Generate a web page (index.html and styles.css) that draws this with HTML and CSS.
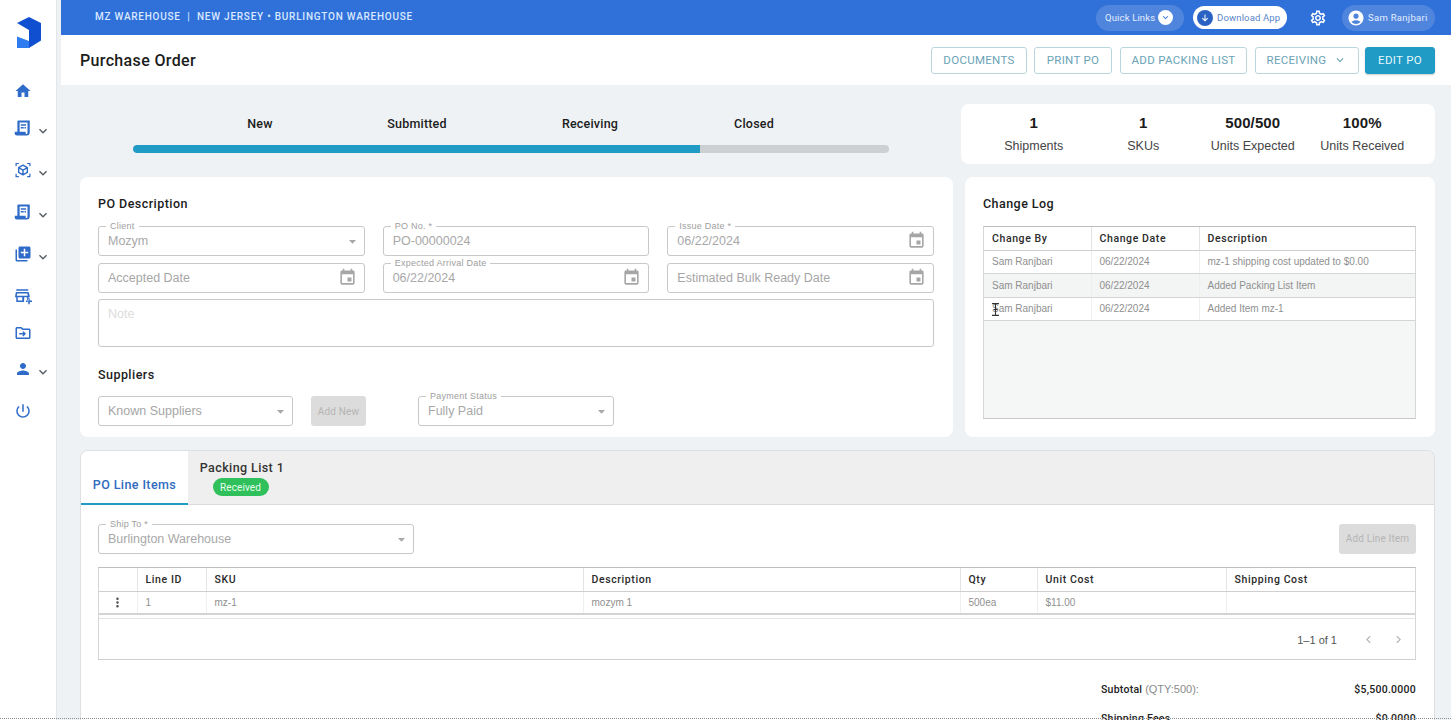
FILE: index.html
```html
<!DOCTYPE html>
<html lang="en">
<head>
<meta charset="utf-8">
<title>Purchase Order</title>
<link rel="stylesheet" href="styles.css">
</head>
<body>
<svg class="sprite" aria-hidden="true">
  <symbol id="i-home" viewBox="0 0 24 24"><path d="M10 20v-6h4v6h5v-8h3L12 3 2 12h3v8z"/></symbol>
  <symbol id="i-chev" viewBox="0 0 24 24"><path d="M16.59 8.59 12 13.17 7.41 8.59 6 10l6 6 6-6z"/></symbol>
  <symbol id="i-receipt" viewBox="0 0 24 24"><path fill-rule="evenodd" d="M6 2h15v15.5c0 2.5-1.5 4.5-4 4.5H4c-1.8 0-3-1.2-3-3v-2h3.5V3.5C4.500 2.700 5.200 2 6 2zm1.500 2.500V17h8v2c0 .6.400 1 1 1s1.500-.8 1.500-2.500V4.500H7.500zM9 7h7v2H9V7zm0 3.500h4v2H9v-2zm5 0h2v2h-2v-2z"/></symbol>
  <symbol id="i-cube" viewBox="0 0 24 24"><path d="M2 7V2.500h4.500v1.600H3.600V7H2zm15.500-4.500H22V7h-1.600V4.100h-2.900V2.500zM2 17h1.600v2.900h2.900v1.600H2V17zm18.400 0H22v4.500h-4.500v-1.600h2.900V17z"/><path fill="none" stroke="currentColor" stroke-width="1.900" stroke-linejoin="round" d="M12 5.500l5.800 3.300v6.400L12 18.500l-5.800-3.300V8.800L12 5.500zM6.400 9l5.600 3.200L17.600 9M12 12.200v6"/></symbol>
  <symbol id="i-lib" viewBox="0 0 24 24"><path d="M4 6H2v14c0 1.100.9 2 2 2h14v-2H4V6zm16-4H8c-1.100 0-2 .9-2 2v12c0 1.100.9 2 2 2h12c1.100 0 2-.9 2-2V4c0-1.100-.9-2-2-2zm-1 9h-4v4h-2v-4H9V9h4V5h2v4h4v2z"/></symbol>
  <symbol id="i-store" viewBox="0 0 24 24"><path fill-rule="evenodd" d="M3 3h16v2H3V3zm-.5 3.500h17L21 12v1.500h-1.500V19h-2v-5.500h-4V20H3v-6.500H1.500V12L2.500 6.500zM4.200 8.500l-.5 3h14.600l-.5-3H4.200zM5 13.500V18h6v-4.500H5zM19 15h2v3h3v2h-3v3h-2v-3h-3v-2h3v-3z"/></symbol>
  <symbol id="i-folder" viewBox="0 0 24 24"><path d="M20 6h-8l-2-2H4c-1.100 0-1.990.9-1.990 2L2 18c0 1.100.9 2 2 2h16c1.100 0 2-.9 2-2V8c0-1.100-.9-2-2-2zm0 12H4V6h5.170l2 2H20v10z"/><path d="M12.500 9.500l-1.300 1.300 1.200 1.200H7v2h5.400l-1.200 1.200 1.300 1.300L16 13z"/></symbol>
  <symbol id="i-person" viewBox="0 0 24 24"><path d="M12 12c2.210 0 4-1.790 4-4s-1.790-4-4-4-4 1.790-4 4 1.790 4 4 4zm0 2c-2.670 0-8 1.340-8 4v2h16v-2c0-2.660-5.330-4-8-4z"/></symbol>
  <symbol id="i-power" viewBox="0 0 24 24"><path d="M13 3h-2v10h2V3zm4.830 2.170-1.420 1.420C17.990 7.860 19 9.810 19 12c0 3.870-3.130 7-7 7s-7-3.130-7-7c0-2.190 1.010-4.140 2.580-5.420L6.170 5.170C4.230 6.820 3 9.260 3 12c0 4.970 4.030 9 9 9s9-4.030 9-9c0-2.740-1.230-5.180-3.170-6.830z"/></symbol>
  <symbol id="i-drop" viewBox="0 0 24 24"><path d="M7 10l5 5 5-5z"/></symbol>
  <symbol id="i-cal" viewBox="0 0 24 24"><path d="M17 12h-5v5h5v-5zM16 1v2H8V1H6v2H5c-1.110 0-1.990.9-1.990 2L3 19c0 1.100.89 2 2 2h14c1.100 0 2-.9 2-2V5c0-1.100-.9-2-2-2h-1V1h-2zm3 18H5V8h14v11z"/></symbol>
  <symbol id="i-gear" viewBox="0 0 24 24"><path d="M19.430 12.980c.04-.32.07-.64.07-.98 0-.34-.03-.66-.07-.98l2.110-1.650c.19-.15.24-.42.12-.64l-2-3.460c-.09-.16-.26-.25-.44-.25-.06 0-.12.01-.17.03l-2.490 1c-.52-.4-1.080-.73-1.690-.98l-.38-2.650C14.460 2.180 14.250 2 14 2h-4c-.25 0-.46.18-.49.42l-.38 2.650c-.61.25-1.170.59-1.690.98l-2.490-1c-.06-.02-.12-.03-.18-.03-.17 0-.34.09-.43.25l-2 3.460c-.13.22-.07.49.12.64l2.110 1.650c-.04.32-.07.65-.07.98 0 .33.03.66.07.98l-2.110 1.650c-.19.15-.24.42-.12.64l2 3.460c.09.16.26.25.44.25.06 0 .12-.01.17-.03l2.490-1c.52.4 1.080.73 1.690.98l.38 2.650c.03.24.24.42.49.42h4c.25 0 .46-.18.49-.42l.38-2.650c.61-.25 1.170-.59 1.690-.98l2.490 1c.06.02.12.03.18.03.17 0 .34-.09.43-.25l2-3.460c.12-.22.07-.49-.12-.64l-2.110-1.650zm-1.980-1.710c.04.31.05.52.05.73 0 .21-.02.43-.05.73l-.14 1.130.89.7 1.080.84-.7 1.210-1.270-.51-1.040-.42-.9.68c-.43.32-.84.56-1.250.73l-1.060.43-.16 1.130-.2 1.350h-1.400l-.19-1.350-.16-1.130-1.060-.43c-.43-.18-.83-.41-1.230-.71l-.91-.7-1.060.43-1.270.51-.7-1.210 1.080-.84.89-.7-.14-1.130c-.03-.31-.05-.54-.05-.74s.02-.43.05-.73l.14-1.130-.89-.7-1.080-.84.7-1.210 1.270.51 1.040.42.9-.68c.43-.32.84-.56 1.250-.73l1.060-.43.16-1.130.2-1.350h1.390l.19 1.350.16 1.130 1.060.43c.43.18.83.41 1.230.71l.91.7 1.060-.43 1.270-.51.7 1.210-1.070.85-.89.7.14 1.130zM12 8c-2.210 0-4 1.790-4 4s1.790 4 4 4 4-1.790 4-4-1.790-4-4-4zm0 6c-1.100 0-2-.9-2-2s.9-2 2-2 2 .9 2 2-.9 2-2 2z"/></symbol>
  <symbol id="i-acct" viewBox="0 0 24 24"><path d="M12 2C6.480 2 2 6.480 2 12s4.480 10 10 10 10-4.480 10-10S17.520 2 12 2zm0 4c1.930 0 3.500 1.570 3.500 3.500S13.930 13 12 13s-3.500-1.570-3.500-3.500S10.070 6 12 6zm0 14c-2.030 0-4.430-.82-6.140-2.880C7.550 15.800 9.680 15 12 15s4.450.8 6.140 2.120C16.430 19.180 14.030 20 12 20z"/></symbol>
  <symbol id="i-down" viewBox="0 0 24 24"><path d="M11 5h2v10.200l3.600-3.600L18 13l-6 6-6-6 1.400-1.400 3.600 3.600z"/></symbol>
  <symbol id="i-more" viewBox="0 0 24 24"><path d="M12 8c1.100 0 2-.9 2-2s-.9-2-2-2-2 .9-2 2 .9 2 2 2zm0 2c-1.100 0-2 .9-2 2s.9 2 2 2 2-.9 2-2-.9-2-2-2zm0 6c-1.100 0-2 .9-2 2s.9 2 2 2 2-.9 2-2-.9-2-2-2z"/></symbol>
  <symbol id="i-left" viewBox="0 0 24 24"><path d="M15.410 7.410 14 6l-6 6 6 6 1.410-1.410L10.830 12z"/></symbol>
  <symbol id="i-right" viewBox="0 0 24 24"><path d="M10 6 8.590 7.410 13.170 12l-4.580 4.590L10 18l6-6z"/></symbol>
</svg>

<div class="app">
  <nav class="sidebar">
    <svg class="logo" viewBox="0 0 24 31">
      <path fill="#0f4fd0" d="M0 6 12 0l12 6v17.500L12 31V13z"/>
      <path fill="#2f7bf0" d="M0 19.500 12 24v7H0z"/>
    </svg>
    <div class="nav-list">
      <a class="nav-item gap-home"><svg class="nav-icon"><use href="#i-home"/></svg></a>
      <a class="nav-item gap-s"><svg class="nav-icon"><use href="#i-receipt"/></svg><svg class="nav-chev"><use href="#i-chev"/></svg></a>
      <a class="nav-item gap-l"><svg class="nav-icon"><use href="#i-cube"/></svg><svg class="nav-chev"><use href="#i-chev"/></svg></a>
      <a class="nav-item gap-l"><svg class="nav-icon"><use href="#i-receipt"/></svg><svg class="nav-chev"><use href="#i-chev"/></svg></a>
      <a class="nav-item gap-l"><svg class="nav-icon"><use href="#i-lib"/></svg><svg class="nav-chev"><use href="#i-chev"/></svg></a>
      <a class="nav-item gap-l"><svg class="nav-icon"><use href="#i-store"/></svg></a>
      <a class="nav-item gap-s"><svg class="nav-icon"><use href="#i-folder"/></svg></a>
      <a class="nav-item gap-p"><svg class="nav-icon"><use href="#i-person"/></svg><svg class="nav-chev"><use href="#i-chev"/></svg></a>
      <a class="nav-item gap-l"><svg class="nav-icon"><use href="#i-power"/></svg></a>
    </div>
  </nav>

  <main class="main">
    <header class="topbar">
      <div class="crumbs">MZ WAREHOUSE &nbsp;|&nbsp; NEW JERSEY • BURLINGTON WAREHOUSE</div>
      <div class="top-actions">
        <div class="pill pill-quick">Quick Links <span class="pill-dot"><svg><use href="#i-chev"/></svg></span></div>
        <div class="pill pill-dl"><span class="dl-dot"><svg><use href="#i-down"/></svg></span>Download App</div>
        <svg class="gear"><use href="#i-gear"/></svg>
        <div class="pill pill-user"><svg class="acct"><use href="#i-acct"/></svg>Sam Ranjbari</div>
      </div>
    </header>

    <section class="titlebar">
      <h1>Purchase Order</h1>
      <div class="btns">
        <button class="btn btn-docs">DOCUMENTS</button>
        <button class="btn btn-print">PRINT PO</button>
        <button class="btn btn-pack">ADD PACKING LIST</button>
        <button class="btn btn-recv">RECEIVING <svg><use href="#i-chev"/></svg></button>
        <button class="btn btn-edit">EDIT PO</button>
      </div>
    </section>

    <div class="content">
      <section class="summary">
        <div class="stepper">
          <div class="steps">
            <span class="s1">New</span><span class="s2">Submitted</span><span class="s3">Receiving</span><span class="s4">Closed</span>
          </div>
          <div class="track"><div class="fill" style="width:75%"></div></div>
        </div>
        <div class="stats">
          <div class="stat"><b>1</b><span>Shipments</span></div>
          <div class="stat"><b>1</b><span>SKUs</span></div>
          <div class="stat"><b>500/500</b><span>Units Expected</span></div>
          <div class="stat"><b>100%</b><span>Units Received</span></div>
        </div>
      </section>

      <section class="cards">
        <div class="card card-po">
          <h2>PO Description</h2>
          <div class="form-grid">
            <div class="field"><label>Client</label><span class="val">Mozym</span><svg class="drop"><use href="#i-drop"/></svg></div>
            <div class="field"><label>PO No. *</label><span class="val">PO-00000024</span></div>
            <div class="field"><label>Issue Date *</label><span class="val">06/22/2024</span><svg class="cal"><use href="#i-cal"/></svg></div>
            <div class="field"><span class="val ph">Accepted Date</span><svg class="cal"><use href="#i-cal"/></svg></div>
            <div class="field"><label>Expected Arrival Date</label><span class="val">06/22/2024</span><svg class="cal"><use href="#i-cal"/></svg></div>
            <div class="field"><span class="val ph">Estimated Bulk Ready Date</span><svg class="cal"><use href="#i-cal"/></svg></div>
            <div class="field note"><span class="note-text">Note</span></div>
          </div>
          <h2 class="h-sup">Suppliers</h2>
          <div class="sup-row">
            <div class="field f-known"><span class="val ph">Known Suppliers</span><svg class="drop"><use href="#i-drop"/></svg></div>
            <div class="dis-btn add-new">Add New</div>
            <div class="field f-pay"><label>Payment Status</label><span class="val">Fully Paid</span><svg class="drop"><use href="#i-drop"/></svg></div>
          </div>
        </div>

        <div class="card card-log">
          <h2>Change Log</h2>
          <div class="log-box">
            <table class="tbl log">
              <colgroup><col class="lc1"><col class="lc2"><col></colgroup>
              <thead><tr><th>Change By</th><th>Change Date</th><th>Description</th></tr></thead>
              <tbody>
                <tr><td>Sam Ranjbari</td><td>06/22/2024</td><td>mz-1 shipping cost updated to $0.00</td></tr>
                <tr class="alt"><td>Sam Ranjbari</td><td>06/22/2024</td><td>Added Packing List Item</td></tr>
                <tr><td class="cur-cell">Sam Ranjbari<svg class="ibeam" viewBox="0 0 7 13"><path d="M0 .6h7M0 12.400h7M3.500.6v11.800M1.500 6.500h4" fill="none" stroke="#333" stroke-width="1.100"/></svg></td><td>06/22/2024</td><td>Added Item mz-1</td></tr>
              </tbody>
            </table>
          </div>
        </div>
      </section>

      <section class="tabcard">
        <div class="tabs">
          <div class="tab tab-on">PO Line Items</div>
          <div class="tab tab-pack">Packing List 1<span class="badge">Received</span></div>
        </div>
        <div class="tab-body">
          <div class="ship-row">
            <div class="field f-ship"><label>Ship To *</label><span class="val">Burlington Warehouse</span><svg class="drop"><use href="#i-drop"/></svg></div>
            <div class="dis-btn add-line">Add Line Item</div>
          </div>
          <div class="grid-box">
            <table class="tbl lines">
              <colgroup><col class="c1"><col class="c2"><col class="c3"><col class="c4"><col class="c5"><col class="c6"><col></colgroup>
              <thead><tr><th></th><th>Line ID</th><th>SKU</th><th>Description</th><th>Qty</th><th>Unit Cost</th><th>Shipping Cost</th></tr></thead>
              <tbody><tr><td class="more"><svg><use href="#i-more"/></svg></td><td>1</td><td>mz-1</td><td>mozym 1</td><td>500ea</td><td>$11.00</td><td></td></tr></tbody>
            </table>
            <div class="pager">
              <span>1–1 of 1</span>
              <svg><use href="#i-left"/></svg>
              <svg><use href="#i-right"/></svg>
            </div>
          </div>
          <div class="totals">
            <div class="tot-row"><span><b>Subtotal</b> <i class="qty">(QTY:500):</i></span><b>$5,500.0000</b></div>
            <div class="tot-row"><span><b>Shipping Fees</b></span><b>$0.0000</b></div>
          </div>
        </div>
      </section>
    </div>
  </main>
</div>
<div class="dotline"></div>
</body>
</html>
```
FILE: styles.css
```css
* { box-sizing: border-box; }
html, body { height: 100%; }
body {
  margin: 0;
  overflow: hidden;
  font-family: Roboto, "Liberation Sans", Arial, sans-serif;
  color: #1c1c1c;
  background: #eef2f4;
}
.sprite { display: none; }
svg { fill: currentColor; }
.app { display: flex; height: 720px; overflow: hidden; }

/* sidebar */
.sidebar {
  width: 57px;
  flex: none;
  background: #fff;
  border-right: 1px solid #e3e6e8;
  padding: 17px 0 0 17px;
}
.logo { display: block; width: 24px; height: 31px; }
.nav-list { display: flex; flex-direction: column; margin-top: 34px; }
.nav-item { display: flex; align-items: center; height: 20px; color: #2f6bc8; }
.gap-home { margin-top: -1px; }
.gap-s { margin-top: 17px; }
.gap-p { margin-top: 16px; }
.gap-l { margin-top: 22px; }
.nav-icon { width: 18px; height: 18px; margin-left: -3px; flex: none; }
.nav-chev { width: 16px; height: 16px; margin: 6px 0 0 3px; color: #555c63; flex: none; }

/* main */
.main { margin-left: 4px; flex: 1; min-width: 0; }
.topbar {
  height: 35px;
  background: #3070d9;
  display: flex;
  align-items: center;
  justify-content: space-between;
  padding: 0 16px 0 34px;
}
.crumbs { font-size: 10px; font-weight: 500; letter-spacing: .76px; color: #d8e8ff; white-space: nowrap; margin-top: -2px; }
.top-actions { display: flex; align-items: center; }
.pill { display: flex; align-items: center; border-radius: 13px; font-size: 9.5px; letter-spacing: .15px; white-space: nowrap; }
.pill-quick { width: 88px; height: 26px; background: #4f85dd; color: #e3eeff; padding-left: 9px; gap: 3px; }
.pill-dot { width: 15px; height: 15px; border-radius: 50%; background: #fff; color: #3070d9; display: flex; align-items: center; justify-content: center; }
.pill-dot svg { width: 11px; height: 11px; }
.pill-dl { width: 94px; height: 23px; margin-left: 9px; background: #fff; color: #5a86c9; padding-left: 4px; gap: 4px; }
.dl-dot { width: 16px; height: 16px; border-radius: 50%; background: #2a62c4; color: #fff; display: flex; align-items: center; justify-content: center; }
.dl-dot svg { width: 12px; height: 12px; }
.gear { width: 18px; height: 18px; margin-left: 22px; color: #fff; }
.pill-user { width: 93px; height: 26px; margin-left: 15px; background: #4f85dd; color: #e3eeff; padding-left: 5px; gap: 3px; letter-spacing: .3px; }
.acct { width: 18px; height: 18px; color: #fff; }

.titlebar {
  height: 50px;
  background: #fff;
  display: flex;
  align-items: center;
  justify-content: space-between;
  padding: 0 16px 0 19px;
}
h1 { margin: 0; font-size: 16px; font-weight: 500; letter-spacing: .35px; color: #1c1c1c; }
.btns { display: flex; align-items: center; }
.btn {
  height: 27px;
  border: 1px solid #b9d6de;
  border-radius: 3px;
  background: #fff;
  color: #6ba3b6;
  font-family: inherit;
  font-size: 11.5px;
  letter-spacing: .3px;
  padding: 0 0 1px;
  display: flex;
  align-items: center;
  justify-content: center;
}
.btn-docs { width: 96px; }
.btn-print { width: 78px; margin-left: 7px; }
.btn-pack { width: 127px; margin-left: 8px; }
.btn-recv { width: 104px; margin-left: 8px; gap: 7px; }
.btn-recv svg { width: 14px; height: 14px; }
.btn-edit { width: 70px; margin-left: 6px; background: #1f9bc6; border-color: #1f9bc6; color: #e8f6fb; box-shadow: 0 1px 2px rgba(0,0,0,.2); }

.content { padding: 19px 16px 0 19px; }
.summary { display: flex; justify-content: space-between; height: 60px; }
.stepper { width: 809px; margin-left: 53px; }
.steps { position: relative; height: 29px; font-size: 12.5px; font-weight: 500; letter-spacing: .2px; }
.steps span { position: absolute; top: 12px; transform: translateX(-50%); white-space: nowrap; }
.s1 { left: 127px; }
.s2 { left: 284px; }
.s3 { left: 457px; }
.s4 { left: 621px; }
.track { width: 756px; height: 8px; margin-top: 12px; border-radius: 4px; background: #cdd0d2; overflow: hidden; }
.fill { height: 100%; background: #1f9bc6; border-radius: 4px 0 0 4px; }
.stats {
  width: 474px;
  height: 60px;
  background: #fff;
  border-radius: 8px;
  display: flex;
  padding-left: 18px;
  font-family: "Liberation Sans", Arial, sans-serif;
}
.stat { width: 109.500px; display: flex; flex-direction: column; align-items: center; padding-top: 10px; white-space: nowrap; }
.stat b { font-size: 15px; font-weight: 700; line-height: 18px; letter-spacing: .1px; }
.stat span { font-size: 12.5px; line-height: 18px; margin-top: 5px; color: #444; }

.cards { display: flex; gap: 12px; margin-top: 13px; }
.card { background: #fff; border-radius: 8px; height: 260px; padding: 19px 18px 0; }
.card-po { width: 873px; }
.card-log { width: 470px; }
h2 { margin: 0; font-size: 12.5px; line-height: 16px; font-weight: 500; letter-spacing: .45px; color: #1c1c1c; }

.form-grid { display: grid; grid-template-columns: repeat(3, 1fr); gap: 6.500px 18px; margin-top: 14px; width: 836px; }
.field {
  position: relative;
  height: 30px;
  border: 1px solid #c8c8c8;
  border-radius: 3px;
  display: flex;
  align-items: center;
  padding: 0 9px;
  background: #fff;
  font-family: "Liberation Sans", Arial, sans-serif;
}
.field label {
  position: absolute;
  top: -6px;
  left: 7px;
  background: #fff;
  padding: 0 4px;
  font-size: 9px;
  line-height: 11px;
  letter-spacing: .25px;
  color: #9e9e9e;
}
.val { font-size: 12.500px; color: #a8a8a8; white-space: nowrap; }
.val.ph { color: #a6a6a6; }
.drop { position: absolute; right: 3px; top: 6px; width: 17px; height: 17px; color: #a8a8a8; }
.cal { position: absolute; right: 7px; top: 4px; width: 19px; height: 19px; color: #a6a6a6; }
.note { grid-column: 1 / 4; height: 48px; align-items: flex-start; }
.note-text { font-size: 12.500px; color: #dcdcdc; padding-top: 7px; }

.h-sup { margin-top: 20px; }
.sup-row { display: flex; margin-top: 13px; }
.f-known { width: 195px; }
.f-pay { width: 196px; margin-left: 52px; }
.dis-btn { background: #dcdcdc; color: #b4b4b4; border-radius: 3px; font-size: 10px; display: flex; align-items: center; justify-content: center; letter-spacing: .15px; }
.add-new { width: 55px; height: 30px; margin-left: 18px; }

.log-box {
  margin-top: 14px;
  width: 433px;
  height: 193px;
  background: #f5f6f6;
  border: 1px solid #d6d6d6;
  border-top-color: #bdbdbd;
  border-bottom-color: #c8c8c8;
}
.tbl { border-collapse: collapse; table-layout: fixed; width: 100%; font-size: 10px; }
.tbl th {
  height: 23px;
  padding: 0 8px;
  text-align: left;
  font-weight: 500;
  font-size: 10.500px;
  letter-spacing: .6px;
  color: #2a2a2a;
  background: #fff;
  border-bottom: 1px solid #cfcfcf;
  border-left: 1px solid #e4e4e4;
}
.tbl th:first-child, .tbl td:first-child { border-left: 0; }
.tbl td {
  height: 23.500px;
  padding: 0 8px;
  font-family: "Liberation Sans", Arial, sans-serif;
  color: #8f8f8f;
  background: #fff;
  border-bottom: 1px solid #d4d4d4;
  border-left: 1px solid #efefef;
  white-space: nowrap;
}
.tbl tr.alt td { background: #f3f4f4; }
.lc1 { width: 107px; }
.lc2 { width: 108px; }
.cur-cell { position: relative; }
.ibeam { position: absolute; left: 8px; top: 5px; width: 7px; height: 13px; }

.tabcard { margin-top: 13px; background: #fff; border-radius: 8px 8px 0 0; border: 1px solid #dde0e2; border-bottom: 0; width: 1355px; height: 300px; overflow: hidden; }
.tabs { display: flex; height: 54px; background: #efefef; border-bottom: 1px solid #dcdcdc; }
.tab { height: 54px; font-size: 12.500px; font-weight: 500; letter-spacing: .4px; }
.tab-on { width: 107px; background: #fff; color: #2f6bc0; border-bottom: 2px solid #1f9bc6; display: flex; align-items: center; justify-content: center; padding-top: 14px; }
.tab-pack { width: 108px; display: flex; flex-direction: column; align-items: center; color: #333; padding-top: 9px; line-height: 15px; }
.badge { margin: 3px 3px 0 0; width: 56px; height: 18px; border-radius: 9px; background: #2fbf5b; color: #e4ffec; font-size: 10px; font-weight: 400; letter-spacing: .1px; display: flex; align-items: center; justify-content: center; }
.tab-body { padding: 19px 18px 0 17px; }
.ship-row { display: flex; justify-content: space-between; align-items: flex-start; }
.f-ship { width: 316px; }
.add-line { width: 77px; height: 29.500px; font-size: 10px; }
.grid-box { margin-top: 13px; height: 93px; border: 1px solid #d6d6d6; border-top-color: #bdbdbd; border-bottom-color: #cfcfcf; }
.lines th { height: 23px; }
.lines td { height: 23px; border-bottom: 2px solid #d4d4d4; }
.c1 { width: 38px; }
.c2 { width: 69px; }
.c3 { width: 377px; }
.c4 { width: 377px; }
.c5 { width: 77px; }
.c6 { width: 189px; }
.more { text-align: center; padding: 0 !important; color: #555 !important; }
.more svg { width: 15px; height: 15px; display: block; margin: 0 auto; }
.pager { display: flex; align-items: center; justify-content: flex-end; height: 42px; margin-top: 3px; border-top: 1px solid #e4e4e4; font-family: "Liberation Sans", Arial, sans-serif; font-size: 11px; color: #555; padding-right: 9px; }
.pager svg { width: 15px; height: 15px; color: #b8b8b8; margin-left: 15px; }
.pager svg:first-of-type { margin-left: 24px; }
.totals { margin-top: 20px; padding-left: 1003px; }
.tot-row { display: flex; justify-content: space-between; font-size: 10.500px; letter-spacing: .25px; height: 29px; align-items: flex-start; color: #8a8a8a; white-space: nowrap; padding-top: 3px; }
.tot-row b { font-weight: 500; color: #222; }
.qty { font-style: normal; font-family: "Liberation Sans", Arial, sans-serif; font-size: 11px; letter-spacing: 0; }

.dotline { position: fixed; left: 0; right: 0; top: 718px; border-top: 1px dotted #8e8e8e; }
```
